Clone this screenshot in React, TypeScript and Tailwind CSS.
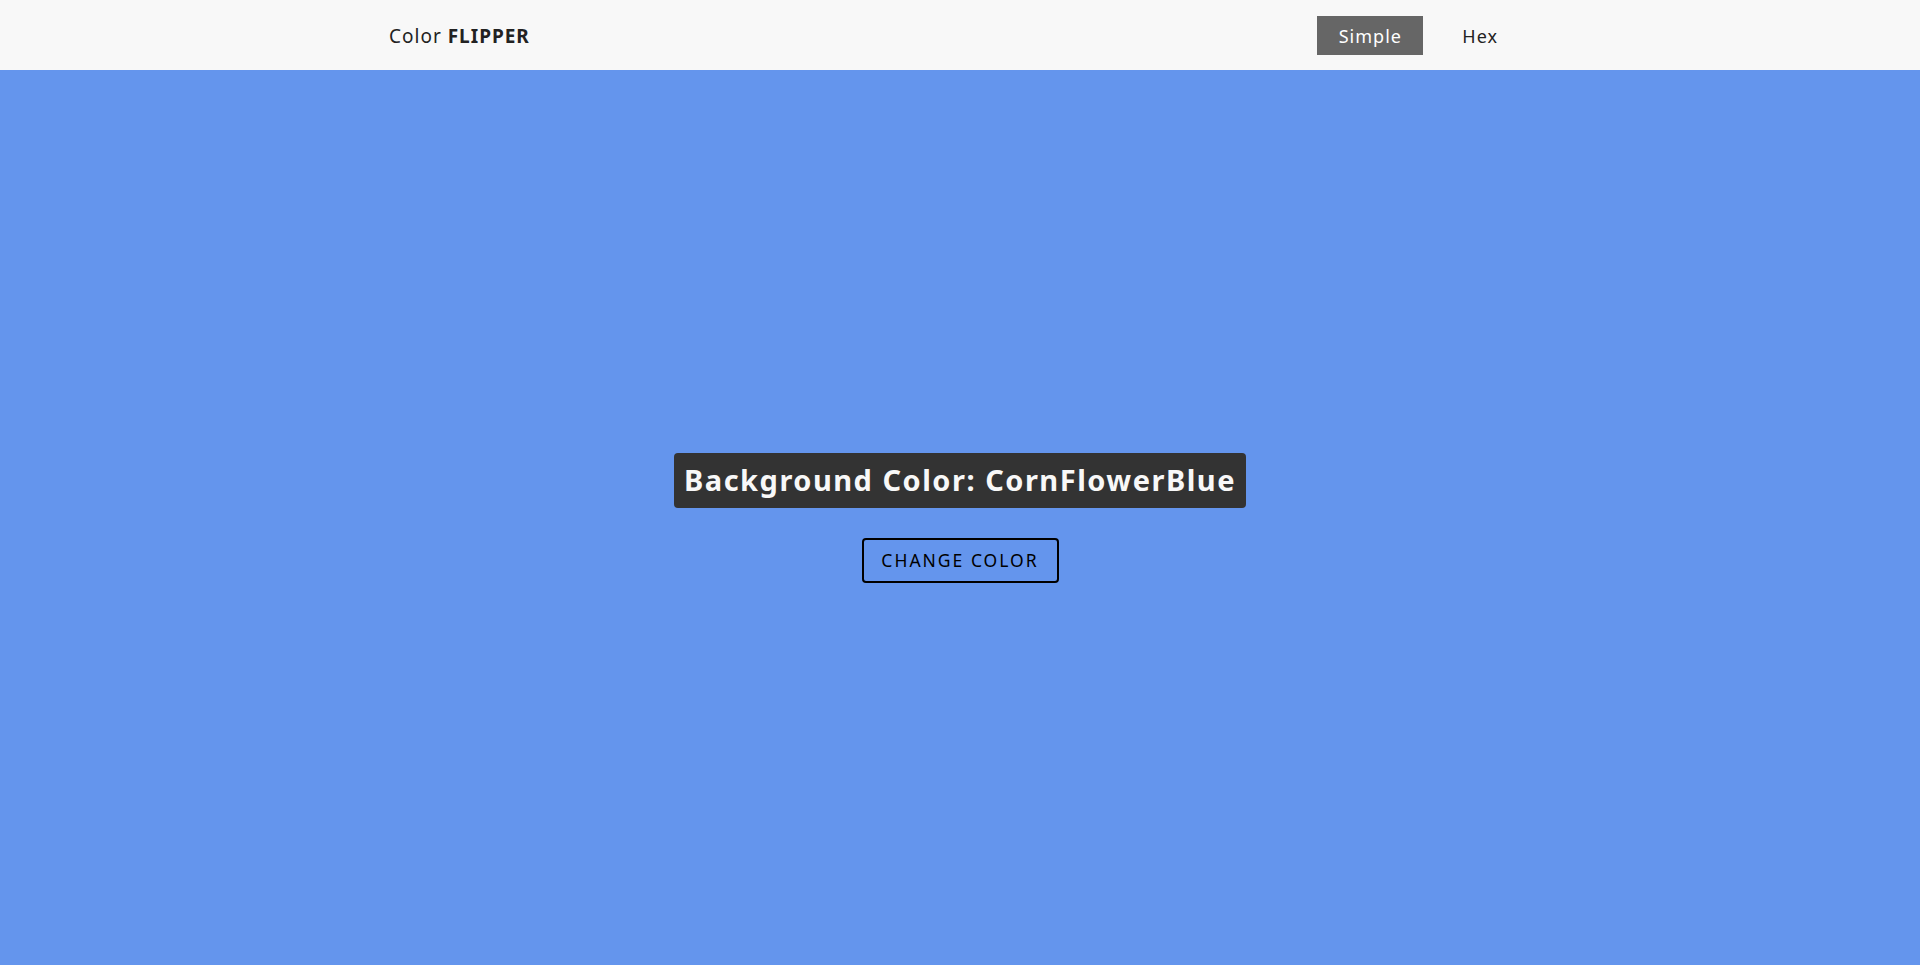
export default function App() {
  return (
    <div className="flex min-h-[965px] flex-col bg-[#6495ed]" style={{ fontFamily: '"Noto Sans", "DejaVu Sans", sans-serif' }}>
      <nav className="flex h-[70px] items-center bg-[#f8f8f8] pt-[3px]">
        <div className="flex w-full items-center pl-[389px] pr-[404px]">
          <h4 className="text-[19px] tracking-[1px] text-[#222]">
            Color <span className="font-bold">FLIPPER</span>
          </h4>
          <ul className="ml-auto flex items-center gap-[21px]">
            <li>
              <a className="-mt-[3px] flex h-[39px] w-[106px] items-center justify-center bg-[#666] pt-[3px] text-[18px] tracking-[1px] text-white">Simple</a>
            </li>
            <li>
              <a className="flex h-[39px] items-center px-[18px] text-[18px] tracking-[1px] text-[#222]">Hex</a>
            </li>
          </ul>
        </div>
      </nav>
      <main className="flex flex-1 flex-col items-center justify-center">
        <h2 className="flex h-[55px] items-center rounded-[4px] bg-[#333] px-[10px] text-[29px] font-bold tracking-[1.5px] text-[#f8f8f8]">
          Background Color: CornFlowerBlue
        </h2>
        <button className="mt-[30px] flex h-[45px] w-[197px] items-center justify-center rounded-[4px] border-2 border-black text-[17.5px] tracking-[2px] text-black">
          CHANGE COLOR
        </button>
      </main>
    </div>
  );
}
